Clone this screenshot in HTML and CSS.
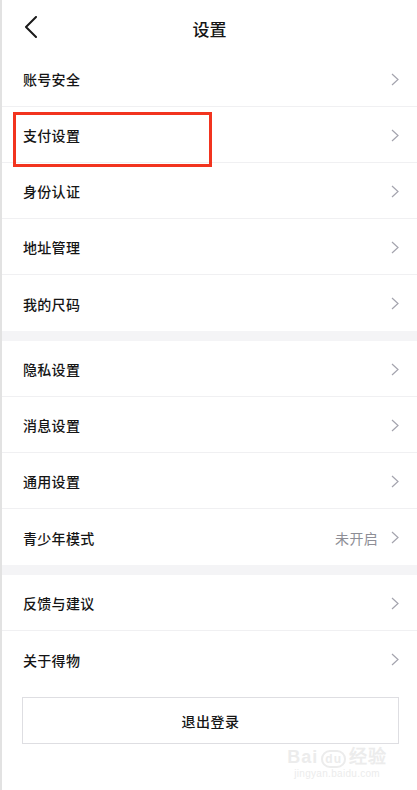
FILE: index.html
```html
<!DOCTYPE html>
<html lang="zh-CN">
<head>
<meta charset="utf-8">
<title>设置</title>
<link rel="stylesheet" href="styles.css">
</head>
<body>
<div class="page">
  <header class="topbar">
    <span class="back">
      <svg width="14" height="22" viewBox="0 0 14 22"><polyline points="12,1 2,11 12,21" fill="none" stroke="#1a1a1a" stroke-width="2" stroke-linecap="round" stroke-linejoin="round"/></svg>
    </span>
    <h1 class="title">设置</h1>
    <span></span>
  </header>

  <section class="group">
    <div class="row"><span class="label">账号安全</span><span class="chev"><svg width="8" height="13" viewBox="0 0 8 13"><polyline points="1,1 7,6.5 1,12" fill="none" stroke="#a4a4ae" stroke-width="1.2"/></svg></span></div>
    <div class="row"><span class="label">支付设置</span><span class="chev"><svg width="8" height="13" viewBox="0 0 8 13"><polyline points="1,1 7,6.5 1,12" fill="none" stroke="#a4a4ae" stroke-width="1.2"/></svg></span><span class="annot"></span></div>
    <div class="row"><span class="label">身份认证</span><span class="chev"><svg width="8" height="13" viewBox="0 0 8 13"><polyline points="1,1 7,6.5 1,12" fill="none" stroke="#a4a4ae" stroke-width="1.2"/></svg></span></div>
    <div class="row"><span class="label">地址管理</span><span class="chev"><svg width="8" height="13" viewBox="0 0 8 13"><polyline points="1,1 7,6.5 1,12" fill="none" stroke="#a4a4ae" stroke-width="1.2"/></svg></span></div>
    <div class="row"><span class="label">我的尺码</span><span class="chev"><svg width="8" height="13" viewBox="0 0 8 13"><polyline points="1,1 7,6.5 1,12" fill="none" stroke="#a4a4ae" stroke-width="1.2"/></svg></span></div>
  </section>

  <section class="group">
    <div class="row"><span class="label">隐私设置</span><span class="chev"><svg width="8" height="13" viewBox="0 0 8 13"><polyline points="1,1 7,6.5 1,12" fill="none" stroke="#a4a4ae" stroke-width="1.2"/></svg></span></div>
    <div class="row"><span class="label">消息设置</span><span class="chev"><svg width="8" height="13" viewBox="0 0 8 13"><polyline points="1,1 7,6.5 1,12" fill="none" stroke="#a4a4ae" stroke-width="1.2"/></svg></span></div>
    <div class="row"><span class="label">通用设置</span><span class="chev"><svg width="8" height="13" viewBox="0 0 8 13"><polyline points="1,1 7,6.5 1,12" fill="none" stroke="#a4a4ae" stroke-width="1.2"/></svg></span></div>
    <div class="row"><span class="label">青少年模式</span><span class="value">未开启</span><span class="chev"><svg width="8" height="13" viewBox="0 0 8 13"><polyline points="1,1 7,6.5 1,12" fill="none" stroke="#a4a4ae" stroke-width="1.2"/></svg></span></div>
  </section>

  <section class="group">
    <div class="row"><span class="label">反馈与建议</span><span class="chev"><svg width="8" height="13" viewBox="0 0 8 13"><polyline points="1,1 7,6.5 1,12" fill="none" stroke="#a4a4ae" stroke-width="1.2"/></svg></span></div>
    <div class="row"><span class="label">关于得物</span><span class="chev"><svg width="8" height="13" viewBox="0 0 8 13"><polyline points="1,1 7,6.5 1,12" fill="none" stroke="#a4a4ae" stroke-width="1.2"/></svg></span></div>
  </section>

  <div class="footer">
    <button class="logout">退出登录</button>
    <div class="watermark">
      <div class="wm-top">Bai<span class="wm-du">du</span>经验</div>
      <div class="wm-url">jingyan.baidu.com</div>
    </div>
  </div>
</div>
</body>
</html>
```

FILE: styles.css
```css
html, body {
  margin: 0;
  padding: 0;
  background: #ffffff;
}

body {
  font-family: "Noto Sans CJK SC", "Noto Sans", sans-serif;
  color: #151515;
}

.page {
  width: 417px;
  height: 790px;
  box-sizing: border-box;
  border-left: 2px solid #e2e2e2;
  background: #fff;
  overflow: hidden;
}

.topbar {
  height: 51px;
  box-sizing: border-box;
  padding-top: 6px;
  display: grid;
  grid-template-columns: 1fr auto 1fr;
  align-items: center;
}

.back {
  display: flex;
  align-items: center;
  padding-left: 22px;
  margin-top: -3px;
}

.title {
  margin: 0;
  font-size: 17px;
  font-weight: 500;
  line-height: 1;
}

.group {
  background: #fff;
}

.group + .group {
  border-top: 10px solid #f4f4f6;
}

.row {
  position: relative;
  height: 56px;
  box-sizing: border-box;
  display: flex;
  align-items: center;
  padding: 1px 18px 0 21px;
  border-bottom: 1px solid #f0f0f2;
  font-size: 14px;
}

.row:last-child {
  border-bottom: none;
}

.label {
  flex: 1;
  font-weight: 500;
  letter-spacing: 0.3px;
}

.value {
  color: #8e8e96;
  font-size: 14px;
  margin-right: 13px;
  letter-spacing: 0.3px;
}

.chev {
  display: flex;
  align-items: center;
}

.annot {
  position: absolute;
  left: 11px;
  top: 5px;
  width: 199px;
  height: 55px;
  box-sizing: border-box;
  border: 3px solid #f2341f;
  z-index: 2;
}

.footer {
  position: relative;
  padding: 10px 18px 0 20px;
}

.logout {
  display: block;
  width: 100%;
  height: 47px;
  background: #fff;
  border: 1px solid #dedee2;
  border-radius: 0;
  font-family: inherit;
  font-size: 14px;
  font-weight: 500;
  color: #151515;
  letter-spacing: 0.5px;
}

.watermark {
  position: absolute;
  right: 30px;
  top: 55px;
  color: #ececec;
  text-align: center;
  font-family: "Liberation Sans", sans-serif;
}

.wm-top {
  font-size: 18px;
  font-weight: 700;
  letter-spacing: 1px;
}

.wm-du {
  font-size: 12px;
  border: 2px solid #ececec;
  border-radius: 10px;
  padding: 0 2px;
  margin: 0 3px;
}

.wm-url {
  font-size: 10px;
  letter-spacing: 0.3px;
}
```
